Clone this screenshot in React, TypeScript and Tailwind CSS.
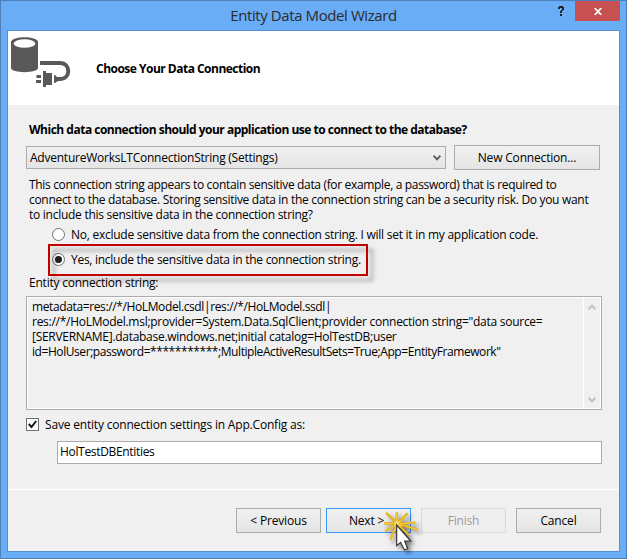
import type { ReactNode } from "react";

function Btn({ children, className }: { children: ReactNode; className: string }) {
  return (
    <button className={"flex h-[25px] shrink-0 items-start justify-center border pt-1 leading-[15px] " + className}>
      {children}
    </button>
  );
}

function Radio({ checked }: { checked?: boolean }) {
  return (
    <span className="mt-px flex size-[13px] shrink-0 items-center justify-center rounded-full border border-[#707070] bg-white">
      {checked && <span className="size-[7px] rounded-full bg-[#212121]" />}
    </span>
  );
}

const normal = "border-[#acacac] bg-linear-to-b from-[#f0f0f0] to-[#e5e5e5]";
const burst =
  "M468 68L503 102L500 66V102L533 70L503 102L556 97L503 102L562 118L503 102L536 134L503 102L480 150L503 102L465 124L503 102L462 100H503";

export default function App() {
  return (
    <div className="relative flex h-[559px] w-[627px] flex-col overflow-hidden border border-[#4b80bb] bg-[#6aadf7] px-1.5 pb-1.5 font-['Open_Sans','Noto_Sans',sans-serif] text-[12px] leading-[15px] whitespace-nowrap text-black">
      <div className="relative flex h-[29px] shrink-0 items-start justify-center">
        <h1 className="mt-[3px] text-[15px] leading-[22px] tracking-[-0.41px] text-[#2b2b2b]">Entity Data Model Wizard</h1>
        <div className="absolute top-0 right-0 flex">
          <svg className="mt-[5px] mr-[11px] h-[10px] w-[6px]" viewBox="0 0 6 10" fill="#222">
            <path d="M1 0h4v1h1v3h-1v1h-1v2h-2v-2h1v-1h1v-2h-2v1h-2v-2h1zM2 8h2v2h-2z" />
          </svg>
          <button className="flex h-5 w-[45px] items-center justify-center bg-[#c75050]">
            <svg width="8" height="7" viewBox="0 0 8 7" stroke="#fff" strokeWidth="1.8">
              <path d="M.7 0L7.3 7M7.3 0L.7 7" />
            </svg>
          </button>
        </div>
      </div>
      <main className="flex h-[522px] shrink-0 flex-col border border-[#5590d0] bg-[#f0f0f0]">
        <header className="flex h-[74px] shrink-0 bg-white pt-[6px] pl-[3px]">
          <svg width="60" height="50" viewBox="0 0 60 50" fill="#595959">
            <path d="M0 5C0-1.500 27-1.500 27 5V31C27 36.500 0 36.500 0 31Z" />
            <ellipse cx="13.5" cy="6.500" rx="10.800" ry="4.300" fill="#fff" />
            <path d="M29 26H49C60 26 60 42 49 42H45" fill="none" stroke="#595959" strokeWidth="4" />
            <path d="M25.500 38h4.500v3h-4.500zM25 43h5v3h-5zM32 34h3v2h6v12h-6v2h-3zM43 38h1l3 3h2v3h-2l-3 2h-1z" />
          </svg>
          <h2 className="mt-6 ml-[25px] font-bold tracking-[-0.51px]">Choose Your Data Connection</h2>
        </header>
        <section className="flex flex-col pt-[17px] pr-[17px] pl-[18px]">
          <p className="pl-[3px] font-bold tracking-[-0.5px]">Which data connection should your application use to connect to the database?</p>
          <div className="mt-2 flex items-center justify-between pr-[2px]">
            <div className={"flex h-[23px] w-[420px] items-start justify-between border pt-[3px] pr-[4px] pl-[3px] " + normal}>
              <span className="tracking-[-0.235px]">AdventureWorksLTConnectionString (Settings)</span>
              <svg className="mt-[5px]" width="8" height="6" viewBox="0 0 8 6" fill="none" stroke="#606060" strokeWidth="2">
                <path d="M.5 .7L4 4.300L7.500 .7" />
              </svg>
            </div>
            <Btn className={"w-[146px] tracking-[-0.18px] " + normal}>New Connection...</Btn>
          </div>
          <div className="mt-[7px] pl-[3px]">
            <p className="tracking-[-0.336px]">This connection string appears to contain sensitive data (for example, a password) that is required to</p>
            <p className="tracking-[-0.308px]">connect to the database. Storing sensitive data in the connection string can be a security risk. Do you want</p>
            <p className="tracking-[-0.268px]">to include this sensitive data in the connection string?</p>
          </div>
          <label className="mt-[5px] flex gap-1.5 pl-[26px] tracking-[-0.258px]">
            <Radio />
            No, exclude sensitive data from the connection string. I will set it in my application code.
          </label>
          <label className="relative mt-[10px] flex gap-1.5 pl-[26px] tracking-[-0.276px]">
            <span className="absolute top-[-8px] left-[22px] h-[32px] w-[320px] border-2 border-[#c00000] drop-shadow-[5px_5px_2px_rgba(0,0,0,0.35)]" />
            <Radio checked />
            <span className="relative">Yes, include the sensitive data in the connection string.</span>
          </label>
          <p className="relative mt-2 pl-[3px] tracking-[-0.224px]">Entity connection string:</p>
          <div className="mt-[6px] flex h-[114px] border border-[#acacac] bg-white p-px">
            <div className="w-[555px] bg-[#f0f0f0] pt-px pl-1">
              <p className="tracking-[-0.38px]">metadata=res://*/HoLModel.csdl|res://*/HoLModel.ssdl|</p>
              <p className="tracking-[-0.27px]">res://*/HoLModel.msl;provider=System.Data.SqlClient;provider connection string="data source=</p>
              <p className="tracking-[-0.286px]">[SERVERNAME].database.windows.net;initial catalog=HolTestDB;user</p>
              <p className="tracking-[-0.43px]">id=HolUser;password=***********;MultipleActiveResultSets=True;App=EntityFramework"</p>
            </div>
            <div className="ml-px flex w-4 flex-col items-center justify-between bg-[#f0f0f0] pt-[6px] pb-[5px]">
              <svg width="8" height="6" viewBox="0 0 8 6" fill="none" stroke="#bfbfbf" strokeWidth="2">
                <path d="M.5 5.300L4 1.700L7.500 5.300" />
              </svg>
              <svg width="8" height="6" viewBox="0 0 8 6" fill="none" stroke="#bfbfbf" strokeWidth="2">
                <path d="M.5 .7L4 4.300L7.500 .7" />
              </svg>
            </div>
          </div>
          <label className="mt-[7px] flex gap-[6px] tracking-[-0.186px]">
            <span className="mt-px flex size-[13px] items-center justify-center border border-[#707070] bg-white">
              <svg width="9" height="9" viewBox="0 0 9 9" fill="none" stroke="#111" strokeWidth="2">
                <path d="M.8 4L3.500 7L8.200 1" />
              </svg>
            </span>
            Save entity connection settings in App.Config as:
          </label>
          <div className="mt-[9px] ml-[31px] h-[23px] border border-[#acacac] bg-white pt-[2px] pl-[2px] tracking-[-0.325px]">HolTestDBEntities</div>
        </section>
        <footer className="mt-[25px] flex border-t border-white pt-[18px] pl-[228px] tracking-[-0.18px]">
          <Btn className={"mr-[5px] w-[85px] " + normal}>&lt; Previous</Btn>
          <Btn className="mr-[10px] w-[85px] border-[#3399ff] bg-linear-to-b from-[#f0f0f0] to-[#e5e5e5] pr-[4px]">Next &gt;</Btn>
          <Btn className="mr-[10px] w-[85px] border-[#d9d9d9] bg-[#efefef] text-[#9c9c9c]">Finish</Btn>
          <Btn className={"w-[85px] " + normal}>Cancel</Btn>
        </footer>
      </main>
      <svg className="absolute top-[507px] left-[379px] drop-shadow-[3px_3px_2px_rgba(0,0,0,0.5)]" width="50" height="50" viewBox="450 54 150 150">
        <path d={burst} fill="none" stroke="#e0a408" strokeWidth="6.500" />
        <circle cx="503" cy="102" r="13" fill="#e9b41c" />
        <path d={burst} fill="none" stroke="#f6cd3c" strokeWidth="2.500" />
        <circle cx="500" cy="99" r="7" fill="#e9d873" />
        <path d="M500 105V167L512 157L523 180L533 176L524 153H542Z" fill="#fff" stroke="#333" strokeWidth="3.500" />
      </svg>
    </div>
  );
}
